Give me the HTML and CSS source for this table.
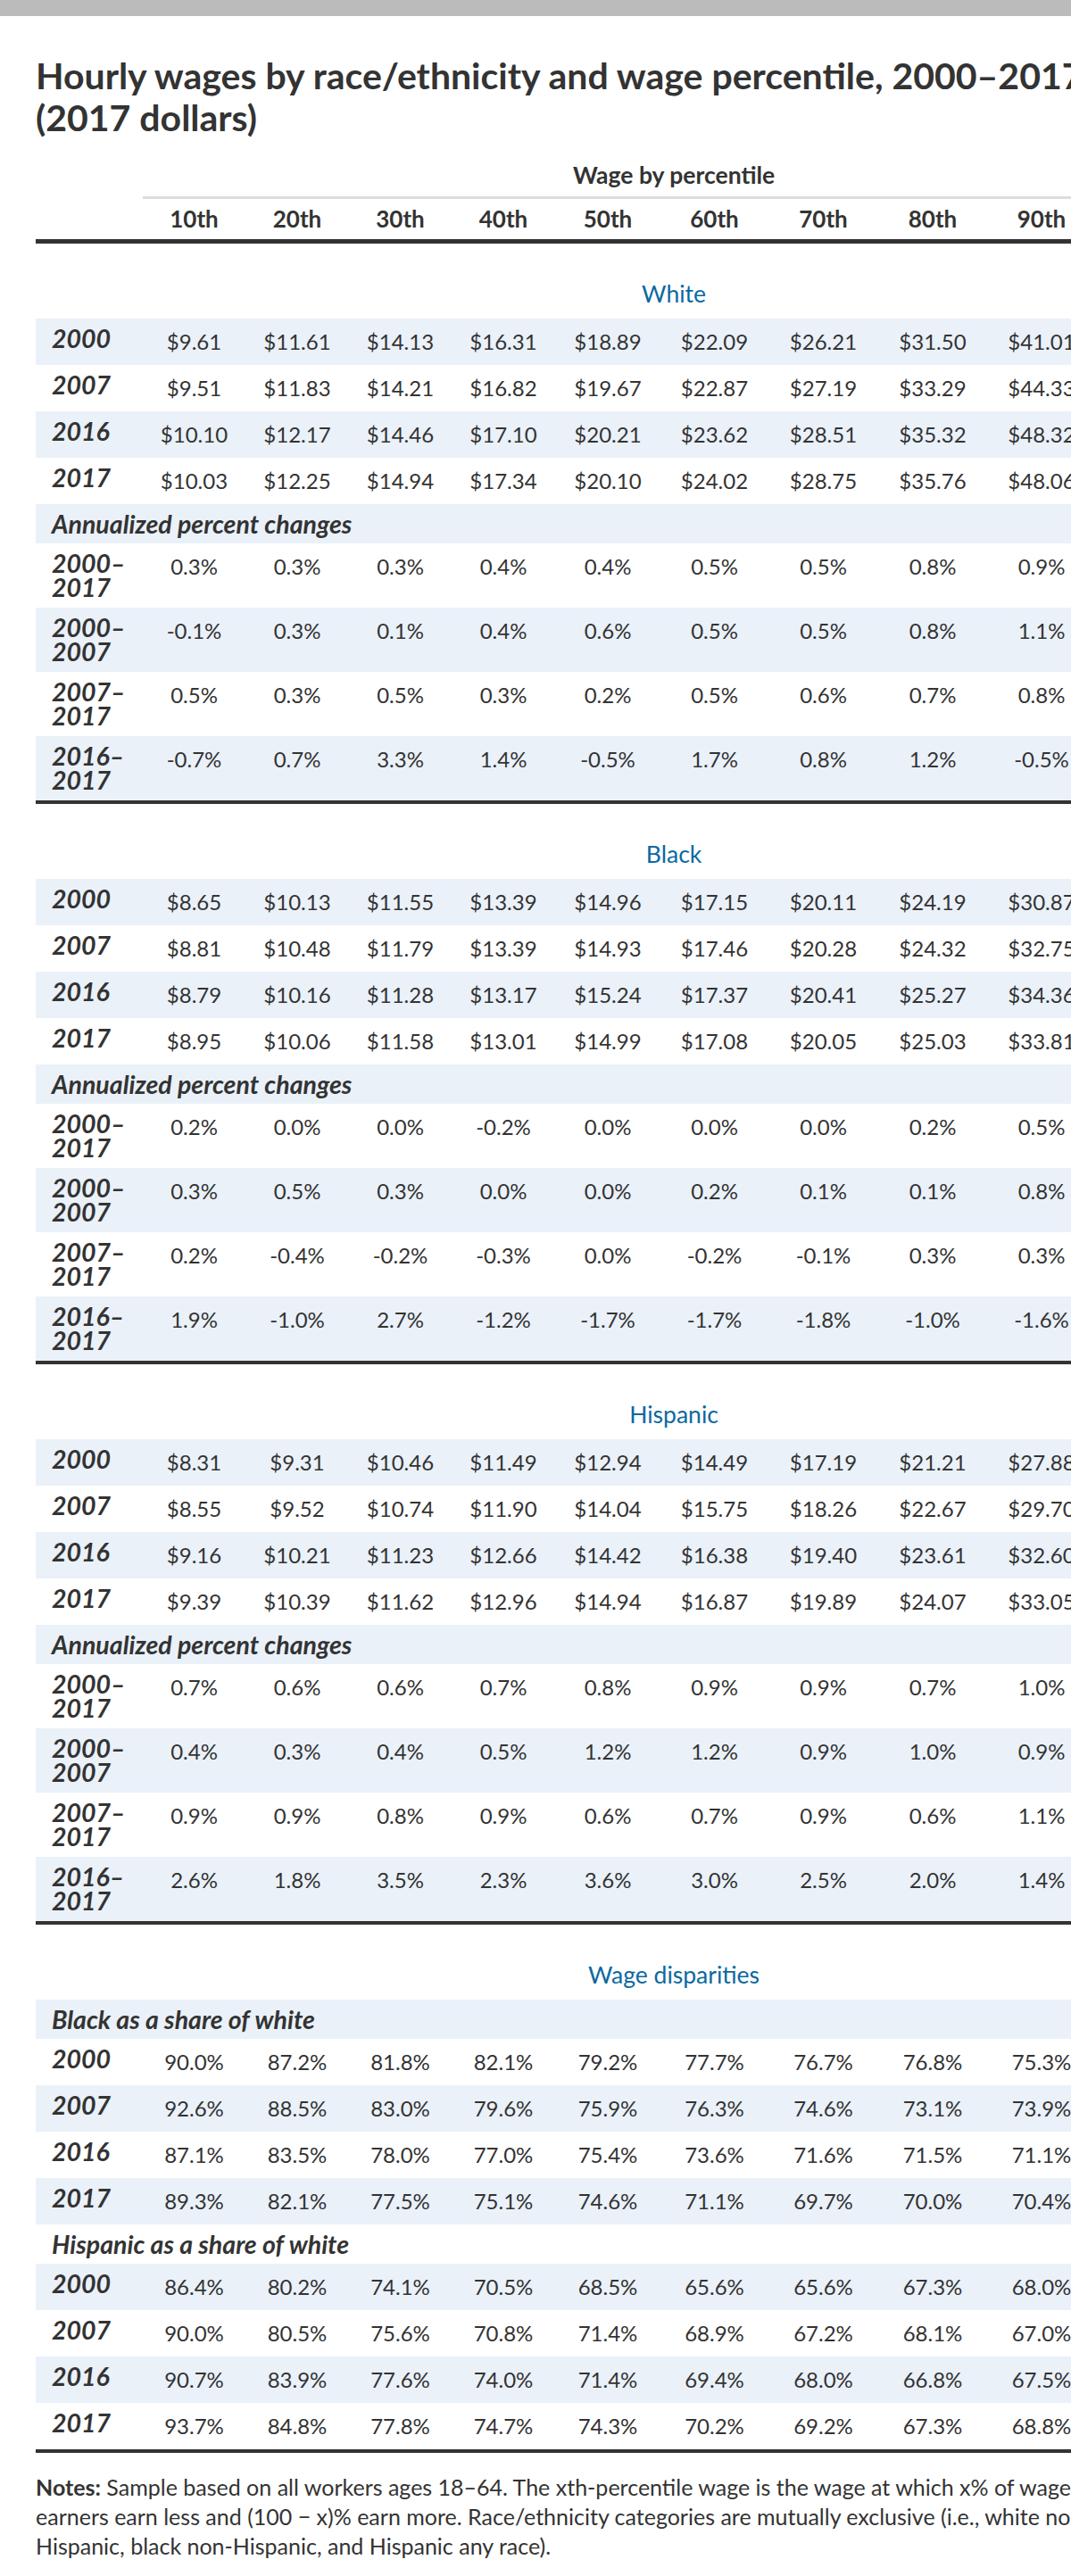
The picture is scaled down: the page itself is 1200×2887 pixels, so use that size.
FILE: index.html
```html
<!DOCTYPE html>
<html lang="en">
<head>
<meta charset="utf-8">
<title>Hourly wages by race/ethnicity and wage percentile</title>
<link rel="stylesheet" href="styles.css">
</head>
<body>
<div class="topbar"></div>
<div class="figure">
  <h1 class="title">Hourly wages by race/ethnicity and wage percentile, 2000–2017 (2017 dollars)</h1>
  <table class="wages">
    <colgroup>
      <col class="w-label">
      <col class="w115"><col class="w116"><col class="w115"><col class="w116"><col class="w118">
      <col class="w121"><col class="w123"><col class="w122"><col class="w122"><col class="w122">
    </colgroup>
    <thead>
      <tr class="group-row">
        <th></th>
        <th class="group" colspan="10">Wage by percentile</th>
      </tr>
      <tr class="pct-row">
        <th></th>
        <th>10th</th><th>20th</th><th>30th</th><th>40th</th><th>50th</th><th>60th</th><th>70th</th><th>80th</th><th>90th</th><th></th>
      </tr>
    </thead>
    <tbody>
      <tr class="section"><td></td><td colspan="10">White</td></tr>
      <tr><th>2000</th><td>$9.61</td><td>$11.61</td><td>$14.13</td><td>$16.31</td><td>$18.89</td><td>$22.09</td><td>$26.21</td><td>$31.50</td><td>$41.01</td><td></td></tr>
      <tr><th>2007</th><td>$9.51</td><td>$11.83</td><td>$14.21</td><td>$16.82</td><td>$19.67</td><td>$22.87</td><td>$27.19</td><td>$33.29</td><td>$44.33</td><td></td></tr>
      <tr><th>2016</th><td>$10.10</td><td>$12.17</td><td>$14.46</td><td>$17.10</td><td>$20.21</td><td>$23.62</td><td>$28.51</td><td>$35.32</td><td>$48.32</td><td></td></tr>
      <tr><th>2017</th><td>$10.03</td><td>$12.25</td><td>$14.94</td><td>$17.34</td><td>$20.10</td><td>$24.02</td><td>$28.75</td><td>$35.76</td><td>$48.06</td><td></td></tr>
      <tr class="sub"><th colspan="11">Annualized percent changes</th></tr>
      <tr><th>2000–2017</th><td>0.3%</td><td>0.3%</td><td>0.3%</td><td>0.4%</td><td>0.4%</td><td>0.5%</td><td>0.5%</td><td>0.8%</td><td>0.9%</td><td></td></tr>
      <tr><th>2000–2007</th><td>-0.1%</td><td>0.3%</td><td>0.1%</td><td>0.4%</td><td>0.6%</td><td>0.5%</td><td>0.5%</td><td>0.8%</td><td>1.1%</td><td></td></tr>
      <tr><th>2007–2017</th><td>0.5%</td><td>0.3%</td><td>0.5%</td><td>0.3%</td><td>0.2%</td><td>0.5%</td><td>0.6%</td><td>0.7%</td><td>0.8%</td><td></td></tr>
      <tr><th>2016–2017</th><td>-0.7%</td><td>0.7%</td><td>3.3%</td><td>1.4%</td><td>-0.5%</td><td>1.7%</td><td>0.8%</td><td>1.2%</td><td>-0.5%</td><td></td></tr>
    </tbody>
    <tbody>
      <tr class="section"><td></td><td colspan="10">Black</td></tr>
      <tr><th>2000</th><td>$8.65</td><td>$10.13</td><td>$11.55</td><td>$13.39</td><td>$14.96</td><td>$17.15</td><td>$20.11</td><td>$24.19</td><td>$30.87</td><td></td></tr>
      <tr><th>2007</th><td>$8.81</td><td>$10.48</td><td>$11.79</td><td>$13.39</td><td>$14.93</td><td>$17.46</td><td>$20.28</td><td>$24.32</td><td>$32.75</td><td></td></tr>
      <tr><th>2016</th><td>$8.79</td><td>$10.16</td><td>$11.28</td><td>$13.17</td><td>$15.24</td><td>$17.37</td><td>$20.41</td><td>$25.27</td><td>$34.36</td><td></td></tr>
      <tr><th>2017</th><td>$8.95</td><td>$10.06</td><td>$11.58</td><td>$13.01</td><td>$14.99</td><td>$17.08</td><td>$20.05</td><td>$25.03</td><td>$33.81</td><td></td></tr>
      <tr class="sub"><th colspan="11">Annualized percent changes</th></tr>
      <tr><th>2000–2017</th><td>0.2%</td><td>0.0%</td><td>0.0%</td><td>-0.2%</td><td>0.0%</td><td>0.0%</td><td>0.0%</td><td>0.2%</td><td>0.5%</td><td></td></tr>
      <tr><th>2000–2007</th><td>0.3%</td><td>0.5%</td><td>0.3%</td><td>0.0%</td><td>0.0%</td><td>0.2%</td><td>0.1%</td><td>0.1%</td><td>0.8%</td><td></td></tr>
      <tr><th>2007–2017</th><td>0.2%</td><td>-0.4%</td><td>-0.2%</td><td>-0.3%</td><td>0.0%</td><td>-0.2%</td><td>-0.1%</td><td>0.3%</td><td>0.3%</td><td></td></tr>
      <tr><th>2016–2017</th><td>1.9%</td><td>-1.0%</td><td>2.7%</td><td>-1.2%</td><td>-1.7%</td><td>-1.7%</td><td>-1.8%</td><td>-1.0%</td><td>-1.6%</td><td></td></tr>
    </tbody>
    <tbody>
      <tr class="section"><td></td><td colspan="10">Hispanic</td></tr>
      <tr><th>2000</th><td>$8.31</td><td>$9.31</td><td>$10.46</td><td>$11.49</td><td>$12.94</td><td>$14.49</td><td>$17.19</td><td>$21.21</td><td>$27.88</td><td></td></tr>
      <tr><th>2007</th><td>$8.55</td><td>$9.52</td><td>$10.74</td><td>$11.90</td><td>$14.04</td><td>$15.75</td><td>$18.26</td><td>$22.67</td><td>$29.70</td><td></td></tr>
      <tr><th>2016</th><td>$9.16</td><td>$10.21</td><td>$11.23</td><td>$12.66</td><td>$14.42</td><td>$16.38</td><td>$19.40</td><td>$23.61</td><td>$32.60</td><td></td></tr>
      <tr><th>2017</th><td>$9.39</td><td>$10.39</td><td>$11.62</td><td>$12.96</td><td>$14.94</td><td>$16.87</td><td>$19.89</td><td>$24.07</td><td>$33.05</td><td></td></tr>
      <tr class="sub"><th colspan="11">Annualized percent changes</th></tr>
      <tr><th>2000–2017</th><td>0.7%</td><td>0.6%</td><td>0.6%</td><td>0.7%</td><td>0.8%</td><td>0.9%</td><td>0.9%</td><td>0.7%</td><td>1.0%</td><td></td></tr>
      <tr><th>2000–2007</th><td>0.4%</td><td>0.3%</td><td>0.4%</td><td>0.5%</td><td>1.2%</td><td>1.2%</td><td>0.9%</td><td>1.0%</td><td>0.9%</td><td></td></tr>
      <tr><th>2007–2017</th><td>0.9%</td><td>0.9%</td><td>0.8%</td><td>0.9%</td><td>0.6%</td><td>0.7%</td><td>0.9%</td><td>0.6%</td><td>1.1%</td><td></td></tr>
      <tr><th>2016–2017</th><td>2.6%</td><td>1.8%</td><td>3.5%</td><td>2.3%</td><td>3.6%</td><td>3.0%</td><td>2.5%</td><td>2.0%</td><td>1.4%</td><td></td></tr>
    </tbody>
    <tbody>
      <tr class="section"><td></td><td colspan="10">Wage disparities</td></tr>
      <tr class="sub"><th colspan="11">Black as a share of white</th></tr>
      <tr><th>2000</th><td>90.0%</td><td>87.2%</td><td>81.8%</td><td>82.1%</td><td>79.2%</td><td>77.7%</td><td>76.7%</td><td>76.8%</td><td>75.3%</td><td></td></tr>
      <tr><th>2007</th><td>92.6%</td><td>88.5%</td><td>83.0%</td><td>79.6%</td><td>75.9%</td><td>76.3%</td><td>74.6%</td><td>73.1%</td><td>73.9%</td><td></td></tr>
      <tr><th>2016</th><td>87.1%</td><td>83.5%</td><td>78.0%</td><td>77.0%</td><td>75.4%</td><td>73.6%</td><td>71.6%</td><td>71.5%</td><td>71.1%</td><td></td></tr>
      <tr><th>2017</th><td>89.3%</td><td>82.1%</td><td>77.5%</td><td>75.1%</td><td>74.6%</td><td>71.1%</td><td>69.7%</td><td>70.0%</td><td>70.4%</td><td></td></tr>
      <tr class="sub"><th colspan="11">Hispanic as a share of white</th></tr>
      <tr><th>2000</th><td>86.4%</td><td>80.2%</td><td>74.1%</td><td>70.5%</td><td>68.5%</td><td>65.6%</td><td>65.6%</td><td>67.3%</td><td>68.0%</td><td></td></tr>
      <tr><th>2007</th><td>90.0%</td><td>80.5%</td><td>75.6%</td><td>70.8%</td><td>71.4%</td><td>68.9%</td><td>67.2%</td><td>68.1%</td><td>67.0%</td><td></td></tr>
      <tr><th>2016</th><td>90.7%</td><td>83.9%</td><td>77.6%</td><td>74.0%</td><td>71.4%</td><td>69.4%</td><td>68.0%</td><td>66.8%</td><td>67.5%</td><td></td></tr>
      <tr><th>2017</th><td>93.7%</td><td>84.8%</td><td>77.8%</td><td>74.7%</td><td>74.3%</td><td>70.2%</td><td>69.2%</td><td>67.3%</td><td>68.8%</td><td></td></tr>
    </tbody>
  </table>
  <p class="notes"><strong>Notes:</strong> Sample based on all workers ages 18–64. The xth-percentile wage is the wage at which x% of wage earners earn less and (100 − x)% earn more. Race/ethnicity categories are mutually exclusive (i.e., white non-Hispanic, black non-Hispanic, and Hispanic any race).</p>
</div>
</body>
</html>
```
FILE: styles.css
```css
html, body {
  margin: 0;
  padding: 0;
  overflow-x: hidden;
  background: #fff;
}

body {
  font-family: Lato, "Noto Sans", sans-serif;
  color: #333;
}

.topbar {
  height: 18px;
  background: #bbbbbb;
}

.figure {
  width: 1309px;
  padding: 0 40px;
}

.title {
  width: 1240px;
  margin: 43px 0 0;
  font-size: 41px;
  line-height: 47px;
  font-weight: 700;
  color: #333;
}

.wages {
  margin-top: 24px;
  width: 1309px;
  table-layout: fixed;
  border-collapse: separate;
  border-spacing: 0;
  font-size: 24px;
}

.w-label { width: 120px; }
.w115 { width: 115px; }
.w116 { width: 116px; }
.w118 { width: 118px; }
.w121 { width: 121px; }
.w122 { width: 122px; }
.w123 { width: 123px; }

.wages th,
.wages td {
  padding: 0;
  vertical-align: top;
}

.group-row .group {
  font-size: 26.5px;
  font-weight: 700;
  text-align: center;
  line-height: 34px;
  padding-bottom: 7px;
  border-bottom: 3px solid #dddddd;
}

.pct-row th {
  font-size: 26px;
  font-weight: 700;
  text-align: center;
  line-height: 34px;
  padding: 5px 0 6px;
  border-bottom: 5px solid #333;
}

.wages tbody tr:nth-child(even) {
  background: #eaf1f9;
}

.wages tbody td {
  text-align: center;
  line-height: 34px;
  padding: 9px 0;
}

.wages tbody th {
  text-align: left;
  font-size: 28.5px;
  font-weight: 700;
  font-style: italic;
  line-height: 27px;
  padding: 9px 8px 9px 18px;
}

.wages tbody tr.section td {
  font-size: 26.5px;
  color: #0b69a0;
  padding: 39px 0 11px;
}

.wages tbody tr.sub th {
  padding: 9px 18px 8px;
}

.wages tbody tr:last-child th,
.wages tbody tr:last-child td {
  border-bottom: 4px solid #333;
}

.notes {
  width: 1240px;
  margin: 22px 0 0;
  font-size: 25px;
  line-height: 33px;
  color: #333;
}

.notes strong {
  font-weight: 700;
}
```
